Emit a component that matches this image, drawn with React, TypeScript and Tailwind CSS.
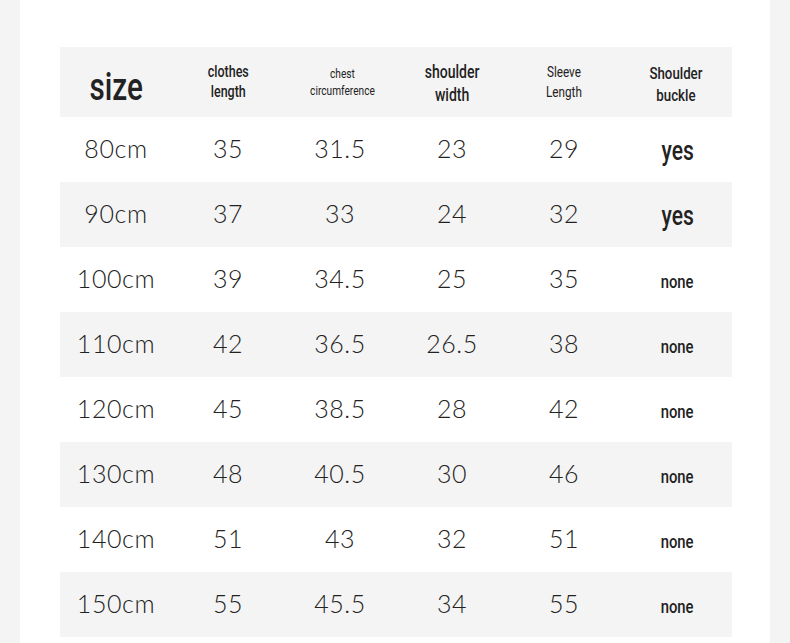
const rows = [
  ["80cm", "35", "31.5", "23", "29", "yes"],
  ["90cm", "37", "33", "24", "32", "yes"],
  ["100cm", "39", "34.5", "25", "35", "none"],
  ["110cm", "42", "36.5", "26.5", "38", "none"],
  ["120cm", "45", "38.5", "28", "42", "none"],
  ["130cm", "48", "40.5", "30", "46", "none"],
  ["140cm", "51", "43", "32", "51", "none"],
  ["150cm", "55", "45.5", "34", "55", "none"],
];

function Cond({ children, className }: { children: React.ReactNode; className: string }) {
  return (
    <span className={`inline-block origin-center scale-x-[0.78] font-['Roboto',sans-serif] text-center ${className}`}>
      {children}
    </span>
  );
}

export default function App() {
  return (
    <div className="w-[790px] h-[643px] bg-[#f4f4f4] overflow-hidden">
      <div className="mx-[20px] h-full bg-white px-[40px] pt-[47px]">
        <div className="w-[672px] text-[#222]">
          {/* header */}
          <div className="grid grid-cols-6 h-[70px] bg-[#f4f4f4] items-center">
            <div className="flex justify-center pt-[9px]">
              <Cond className="text-[38px] font-medium leading-none">size</Cond>
            </div>
            <div className="flex justify-center">
              <Cond className="text-[16px] font-medium leading-[20px]">clothes<br />length</Cond>
            </div>
            <div className="flex justify-center pl-[4px]">
              <Cond className="text-[13px] leading-[17px]">chest<br />circumference</Cond>
            </div>
            <div className="flex justify-center pt-[2px]">
              <Cond className="text-[18px] font-medium leading-[23px]">shoulder<br />width</Cond>
            </div>
            <div className="flex justify-center">
              <Cond className="text-[15px] leading-[20px]">Sleeve<br />Length</Cond>
            </div>
            <div className="flex justify-center pt-[3px]">
              <Cond className="text-[17px] font-medium leading-[22px]">Shoulder<br />buckle</Cond>
            </div>
          </div>
          {/* body */}
          {rows.map((r, i) => (
            <div
              key={r[0]}
              className={`grid grid-cols-6 h-[65px] items-center ${i % 2 === 1 ? "bg-[#f4f4f4]" : "bg-white"}`}
            >
              {r.slice(0, 5).map((c, j) => (
                <div
                  key={j}
                  className="text-center font-['Lato',sans-serif] font-light text-[25px] tracking-[0.6px] leading-none pb-[2px]"
                >
                  {c}
                </div>
              ))}
              <div className="flex justify-center pl-[3px] pt-[4px]">
                {r[5] === "yes" ? (
                  <Cond className="text-[27px] font-medium leading-none">yes</Cond>
                ) : (
                  <Cond className="text-[19px] font-medium leading-none">none</Cond>
                )}
              </div>
            </div>
          ))}
        </div>
      </div>
    </div>
  );
}
